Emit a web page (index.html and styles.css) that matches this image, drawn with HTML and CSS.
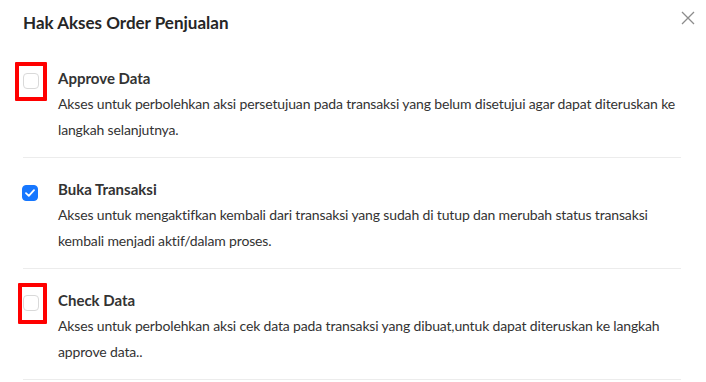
FILE: index.html
```html
<!DOCTYPE html>
<html lang="id">
<head>
<meta charset="utf-8">
<title>Hak Akses Order Penjualan</title>
<link rel="stylesheet" href="styles.css">
</head>
<body>
<div class="modal">
  <div class="modal-header">
    <h2 class="modal-title">Hak Akses Order Penjualan</h2>
    <button class="close" aria-label="Tutup">
      <svg width="14" height="14" viewBox="0 0 14 14"><path d="M1 1L13 13M13 1L1 13" stroke="#8c8c8c" stroke-width="1.3" fill="none"/></svg>
    </button>
  </div>
  <div class="list">
    <div class="item">
      <div class="check-col">
        <span class="checkbox"></span>
        <span class="highlight hl-a"></span>
      </div>
      <div class="text">
        <div class="item-title">Approve Data</div>
        <div class="item-desc">Akses untuk perbolehkan aksi persetujuan pada transaksi yang belum disetujui agar dapat diteruskan ke langkah selanjutnya.</div>
      </div>
    </div>
    <div class="item">
      <div class="check-col">
        <span class="checkbox checked">
          <svg width="10" height="8" viewBox="0 0 10 8"><path d="M1 4.2L3.8 6.8L9 1.2" stroke="#fff" stroke-width="1.8" fill="none" stroke-linecap="round" stroke-linejoin="round"/></svg>
        </span>
      </div>
      <div class="text">
        <div class="item-title">Buka Transaksi</div>
        <div class="item-desc">Akses untuk mengaktifkan kembali dari transaksi yang sudah di tutup dan merubah status transaksi kembali menjadi aktif/dalam proses.</div>
      </div>
    </div>
    <div class="item">
      <div class="check-col">
        <span class="checkbox"></span>
        <span class="highlight hl-c"></span>
      </div>
      <div class="text">
        <div class="item-title">Check Data</div>
        <div class="item-desc">Akses untuk perbolehkan aksi cek data pada transaksi yang dibuat,untuk dapat diteruskan ke langkah approve data..</div>
      </div>
    </div>
  </div>
</div>
</body>
</html>
```
FILE: styles.css
```css
* { box-sizing: border-box; }
html, body { margin: 0; padding: 0; background: #fff; }
body {
  font-family: Lato, "Noto Sans", sans-serif;
  color: #333;
  width: 706px;
  height: 382px;
  overflow: hidden;
}
.modal { width: 706px; }
.modal-header {
  display: flex;
  justify-content: space-between;
  align-items: flex-start;
  padding: 11px 11px 0 23px;
  height: 56px;
}
.modal-title {
  margin: 0;
  font-size: 17px;
  font-weight: 700;
  line-height: 24px;
  color: #262626;
}
.close {
  border: 0;
  background: none;
  padding: 0;
  margin-top: 0;
  width: 14px;
  height: 14px;
  display: flex;
}
.list { padding: 0 25px 0 23px; }
.item {
  display: flex;
  border-bottom: 1px solid #ececec;
  padding: 11px 0 14px;
}
.item + .item { padding-top: 20px; }
.check-col {
  position: relative;
  width: 35px;
  flex: none;
  padding-top: 6px;
}
.checkbox {
  display: flex;
  align-items: center;
  justify-content: center;
  width: 16px;
  height: 16px;
  border: 1px solid #d9d9d9;
  border-radius: 4px;
  background: #fff;
}
.checkbox.checked {
  background: #1677ff;
  border-color: #1677ff;
  margin-top: 1px;
  margin-left: -1px;
}
.highlight {
  position: absolute;
  border: 4px solid #ff0000;
  border-radius: 1px;
}
.hl-a { left: -8px; top: -5px; width: 32px; height: 39px; }
.hl-c { left: -5px; top: -6px; width: 29px; height: 41px; }
.text { flex: 1; min-width: 0; }
.item-title {
  font-size: 15px;
  font-weight: 700;
  line-height: 22px;
  color: #333;
}
.item-desc {
  margin-top: 2px;
  font-size: 14px;
  letter-spacing: -0.15px;
  line-height: 26px;
  color: #333;
}
```
